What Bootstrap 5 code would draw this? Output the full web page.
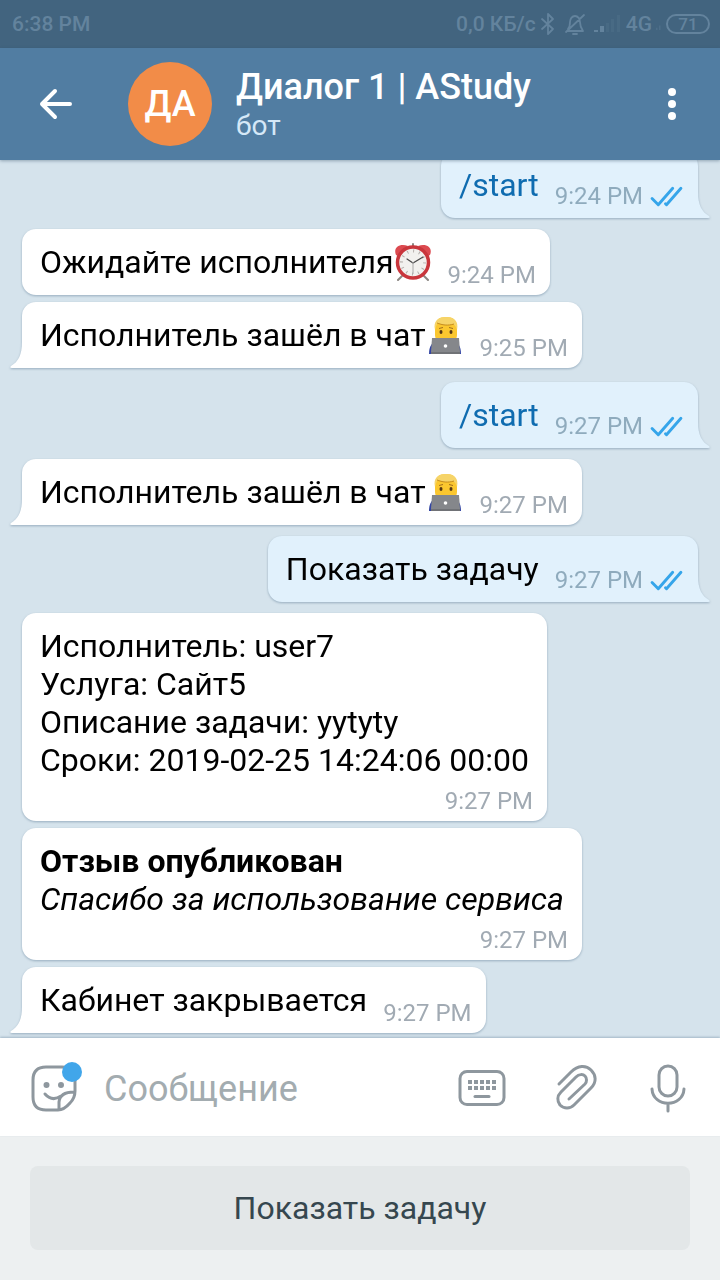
<!DOCTYPE html>
<html lang="ru">
<head>
<meta charset="utf-8">
<meta name="viewport" content="width=device-width, initial-scale=1">
<title>Диалог 1 | AStudy</title>
<link href="https://cdn.jsdelivr.net/npm/bootstrap@5.3.0/dist/css/bootstrap.min.css" rel="stylesheet">
<style>
  body { font-family: Roboto, "Noto Sans", sans-serif; background: #d5e3ec; color: #000; }
  svg { display: block; flex: none; }
  .ico { fill: none; stroke: currentColor; stroke-linecap: round; stroke-linejoin: round; }
  .bare { background: none; border: 0; padding: 0; color: inherit; }

  .statusbar { height: 48px; padding: 0 10px 0 12px; background: #42647f; color: #63839d; font-size: 21px; font-weight: 500; line-height: 24px; }
  .battery { width: 44px; height: 20px; border: 2px solid currentColor; border-radius: 10px; font-size: 17px; line-height: 16px; }
  .appbar { height: 112px; padding: 0 36px; background: #517da2; color: #fff; box-shadow: 0 1px 3px rgba(40, 70, 95, .4); z-index: 1; }
  .avatar { width: 84px; height: 84px; margin-left: 52px; margin-right: 24px; background: #f28c48; font-size: 36px; font-weight: 500; }
  .chat-title { font-size: 36px; line-height: 44px; font-weight: 500; }
  .chat-kind { font-size: 28px; line-height: 34px; color: #d5e8f7; }

  .chat { padding: 0 22px 5px; }
  .bubble { max-width: 90%; padding: 14px 14px 6px 18px; border-radius: 14px; background: #fff; font-size: 32px; line-height: 38px; filter: drop-shadow(0 1px 1px rgba(90, 120, 145, .5)); margin-top: 7px; column-gap: 16px; }
  .bubble.turn { margin-top: 11px; }
  .bubble.later { margin-top: 14px; }
  .bubble.out { background: #e1f1fc; padding-right: 15px; }
  .bubble.tail-in { border-bottom-left-radius: 0; }
  .bubble.tail-out { border-bottom-right-radius: 0; }
  .body-line { margin-bottom: 8px; }
  .stamp { font-size: 24px; line-height: 28px; color: #a1aab3; white-space: nowrap; gap: 7px; }
  .out .stamp { color: #8fabbd; padding-bottom: 2px; }
  .cmd { color: #0f6cb0; text-decoration: none; }
  .tail { position: absolute; bottom: 0; }
  .tail-in .tail { right: 100%; fill: #fff; }
  .tail-out .tail { left: 100%; fill: #e1f1fc; }

  .composer { height: 98px; padding: 2px 34px 0 30px; background: #fff; color: #8e979e; box-shadow: 0 -1px 2px rgba(90, 120, 145, .4); z-index: 1; }
  .composer input { min-width: 0; font-size: 36px; line-height: 42px; padding: 2px 0 0; margin-left: 22px; outline: 0; }
  .composer input::placeholder { color: #a3acb0; opacity: 1; }
  .replies { padding: 30px; background: #edf0f1; }
  .replies button { height: 84px; border-radius: 8px; background: #e3e7e8; color: #36474f; font-size: 32px; }
</style>
</head>
<body>
<svg class="d-none" aria-hidden="true">
  <symbol id="clock" viewBox="0 0 38 38">
    <g stroke="#8c8783" stroke-width="2" stroke-linecap="round"><path d="M8 33l-4 4M30 33l4 4M19 5V1"/></g>
    <path d="M2 12C-1 5 5 0 14 3L4 13zM36 12C39 5 33 0 24 3l10 10z" fill="#dc4a50"/>
    <circle cx="19" cy="19.500" r="15.500" fill="#f2f1ee" stroke="#c9363c" stroke-width="3.500"/>
    <circle cx="19" cy="19.500" r="11.500" fill="none" stroke="#b3aeaa" stroke-width="3" stroke-dasharray="1 5"/>
    <path d="M13 16l6 4 10-6" fill="none" stroke="#4a4a4a" stroke-width="1.200" stroke-linecap="round"/><path d="M19 19v12" stroke="#aaa" stroke-width="1"/>
  </symbol>
  <symbol id="coder" viewBox="0 0 38 38">
    <path d="M3 38c0-8 3-12 8-13h16c5 1 8 5 8 13z" fill="#3345a3"/>
    <path d="M9 12C9 4 13 1 20 1s11 3 11 11v7c0 6-5 9-11 9S9 25 9 19z" fill="#fbc72f"/>
    <path d="M9 14C7 5 12 1 20 1s13 4 11 13c-1-3-2-5-4-6-5 2-11 1-15-1-2 2-2 4-3 7z" fill="#f6d469"/>
    <path d="M11 7c5 2 11 3 17 1" fill="none" stroke="#c58d20" stroke-width="1"/>
    <ellipse cx="15" cy="16" rx="1.500" ry="2" fill="#573815"/><ellipse cx="25" cy="16" rx="1.500" ry="2" fill="#573815"/>
    <path d="M13 12.500l4-1M23 11.500l4 1" stroke="#a16e1d" stroke-width="1"/>
    <path d="M6 22h27l1 14H5z" fill="#85878b"/>
    <path d="M5 36h29v2H5z" fill="#707276"/>
    <circle cx="19.500" cy="30" r="1.800" fill="#fff"/>
  </symbol>
  <symbol id="ticks" viewBox="0 0 32 20">
    <path d="M2 12l6 6L22 2M15 17l1 1L30 2" fill="none" stroke="#35a5ea" stroke-width="2.800" stroke-linecap="round" stroke-linejoin="round"/>
  </symbol>
  <symbol id="tail-l" viewBox="0 0 12 26"><path d="M12 0C12 13 8 20 1 24Q-1 26 2 26H12z"/></symbol>
  <symbol id="tail-r" viewBox="0 0 12 26"><path d="M0 0C0 13 4 20 11 24Q13 26 10 26H0z"/></symbol>
</svg>

<div class="d-flex flex-column vh-100 overflow-hidden">
  <div class="statusbar d-flex align-items-center flex-shrink-0">
    <span class="me-auto">6:38 PM</span>
    <span>0,0 КБ/с</span>
    <svg class="ico ms-1" width="16" height="24" viewBox="0 0 16 24" stroke-width="1.800"><path d="M2 7l11 10-5 5V2l5 5L2 17"/></svg>
    <svg class="ico ms-2" width="22" height="24" viewBox="0 0 22 24" stroke-width="1.800"><path d="M4 17c2-2 2-4 2-7s2-6 5-6 5 3 5 6 0 5 3 9H4M20 3L2 20M9 22h4"/></svg>
    <svg class="ms-2" width="28" height="24" viewBox="0 0 28 24" fill="currentColor"><path d="M0 18h4v2H0zM6 14h4v6H6z"/><path d="M12 11h3v9h-3zM17 7h3v13h-3zM23 3h3v17h-3z" opacity=".2"/></svg>
    <span class="ms-1">4G</span>
    <svg class="mx-1" width="6" height="24" viewBox="0 0 8 24" fill="currentColor" opacity=".35"><path d="M0 17h2v3H0zM4 14h2v6H4z"/></svg>
    <span class="battery text-center">71</span>
  </div>

  <header class="appbar d-flex align-items-center flex-shrink-0 position-relative">
    <button class="bare" type="button" aria-label="Назад">
      <svg class="ico" width="40" height="36" viewBox="0 0 40 36" stroke-width="4"><path d="M34 18H6M19 5L6 18l13 13"/></svg>
    </button>
    <div class="avatar rounded-circle d-flex align-items-center justify-content-center flex-shrink-0">ДА</div>
    <div class="flex-grow-1 overflow-hidden">
      <h1 class="chat-title m-0 text-truncate">Диалог 1 | AStudy</h1>
      <div class="chat-kind">бот</div>
    </div>
    <button class="bare" type="button" aria-label="Меню">
      <svg width="24" height="40" viewBox="0 0 24 40" fill="currentColor"><circle cx="12" cy="8" r="4"/><circle cx="12" cy="20" r="4"/><circle cx="12" cy="32" r="4"/></svg>
    </button>
  </header>

  <main class="chat d-flex flex-column justify-content-end flex-grow-1 overflow-hidden">
    <div class="bubble out tail-out position-relative d-flex align-items-end align-self-end flex-shrink-0">
      <a class="cmd body-line" href="#start">/start</a>
      <div class="stamp d-flex align-items-center">9:24 PM <svg width="33" height="21"><use href="#ticks"/></svg></div>
      <svg class="tail" width="12" height="26"><use href="#tail-r"/></svg>
    </div>
    <div class="bubble turn d-flex align-items-end align-self-start flex-shrink-0">
      <div class="body-line d-flex">Ожидайте исполнителя<svg width="38" height="38" role="img" aria-label="Будильник"><use href="#clock"/></svg></div>
      <div class="stamp">9:24 PM</div>
    </div>
    <div class="bubble tail-in position-relative d-flex align-items-end align-self-start flex-shrink-0">
      <div class="body-line d-flex">Исполнитель зашёл в чат<svg width="38" height="38" role="img" aria-label="Программист"><use href="#coder"/></svg></div>
      <div class="stamp">9:25 PM</div>
      <svg class="tail" width="12" height="26"><use href="#tail-l"/></svg>
    </div>
    <div class="bubble out later tail-out position-relative d-flex align-items-end align-self-end flex-shrink-0">
      <a class="cmd body-line" href="#start">/start</a>
      <div class="stamp d-flex align-items-center">9:27 PM <svg width="33" height="21"><use href="#ticks"/></svg></div>
      <svg class="tail" width="12" height="26"><use href="#tail-r"/></svg>
    </div>
    <div class="bubble turn tail-in position-relative d-flex align-items-end align-self-start flex-shrink-0">
      <div class="body-line d-flex">Исполнитель зашёл в чат<svg width="38" height="38" role="img" aria-label="Программист"><use href="#coder"/></svg></div>
      <div class="stamp">9:27 PM</div>
      <svg class="tail" width="12" height="26"><use href="#tail-l"/></svg>
    </div>
    <div class="bubble out turn tail-out position-relative d-flex align-items-end align-self-end flex-shrink-0">
      <div class="body-line">Показать задачу</div>
      <div class="stamp d-flex align-items-center">9:27 PM <svg width="33" height="21"><use href="#ticks"/></svg></div>
      <svg class="tail" width="12" height="26"><use href="#tail-r"/></svg>
    </div>
    <div class="bubble turn align-self-start flex-shrink-0">
      <div class="body-line pe-1">Исполнитель: user7<br>Услуга: Сайт5<br>Описание задачи: yytyty<br>Сроки: 2019-02-25 14:24:06 00:00</div>
      <div class="stamp text-end">9:27 PM</div>
    </div>
    <div class="bubble align-self-start flex-shrink-0">
      <div class="body-line pe-1"><b class="fw-bold">Отзыв опубликован</b><br><i>Спасибо за использование сервиса</i></div>
      <div class="stamp text-end">9:27 PM</div>
    </div>
    <div class="bubble tail-in position-relative d-flex align-items-end align-self-start flex-shrink-0">
      <div class="body-line">Кабинет закрывается</div>
      <div class="stamp">9:27 PM</div>
      <svg class="tail" width="12" height="26"><use href="#tail-l"/></svg>
    </div>
  </main>

  <form class="composer d-flex align-items-center flex-shrink-0 position-relative">
    <button class="bare" type="button" aria-label="Стикеры">
      <svg class="ico" width="52" height="52" viewBox="0 0 52 52" stroke-width="3">
        <path d="M28 48H16Q3 48 3 35V18Q3 5 16 5H32Q45 5 45 18V29Q45 36 40 41Q34 48 28 48zM29 47V40Q30 30 44 30M15 32Q22 40 31 34"/>
        <circle cx="16.500" cy="23" r="1.500"/><circle cx="31" cy="23" r="1.500"/>
        <circle cx="42" cy="10" r="10" fill="#41a6ea" stroke="none"/>
      </svg>
    </button>
    <input class="border-0 bg-transparent flex-grow-1" type="text" placeholder="Сообщение" aria-label="Сообщение">
    <button class="bare" type="button" aria-label="Клавиатура">
      <svg class="ico" width="48" height="48" viewBox="0 0 48 48" stroke-width="3">
        <rect x="2" y="7.500" width="44" height="33" rx="7"/>
        <path d="M10 18h28M10 24h28" stroke-width="4" stroke-linecap="butt" stroke-dasharray="4 2"/><path d="M17 32.500h14"/>
      </svg>
    </button>
    <button class="bare ms-5" type="button" aria-label="Прикрепить файл">
      <svg class="ico" width="48" height="48" viewBox="0 0 48 48" stroke-width="3">
        <path d="M5 20L17 8C24 1 32 1 37 6C42 11 43 18 37 24L20 41C16 45 10 45 6 41C3 37 3 32 7 28L22 13C25 10 29 10 31 12C33 14 33 18 31 20L15 35"/>
      </svg>
    </button>
    <button class="bare ms-5" type="button" aria-label="Голосовое сообщение">
      <svg class="ico" width="36" height="50" viewBox="0 0 36 50" stroke-width="3">
        <rect x="9" y="3" width="18" height="30" rx="9"/><path d="M2 26C3 45 33 45 34 26M18 41V48"/>
      </svg>
    </button>
  </form>

  <div class="replies flex-shrink-0">
    <button class="bare w-100" type="button">Показать задачу</button>
  </div>
</div>
<script src="https://cdn.jsdelivr.net/npm/bootstrap@5.3.0/dist/js/bootstrap.bundle.min.js"></script>
</body>
</html>
